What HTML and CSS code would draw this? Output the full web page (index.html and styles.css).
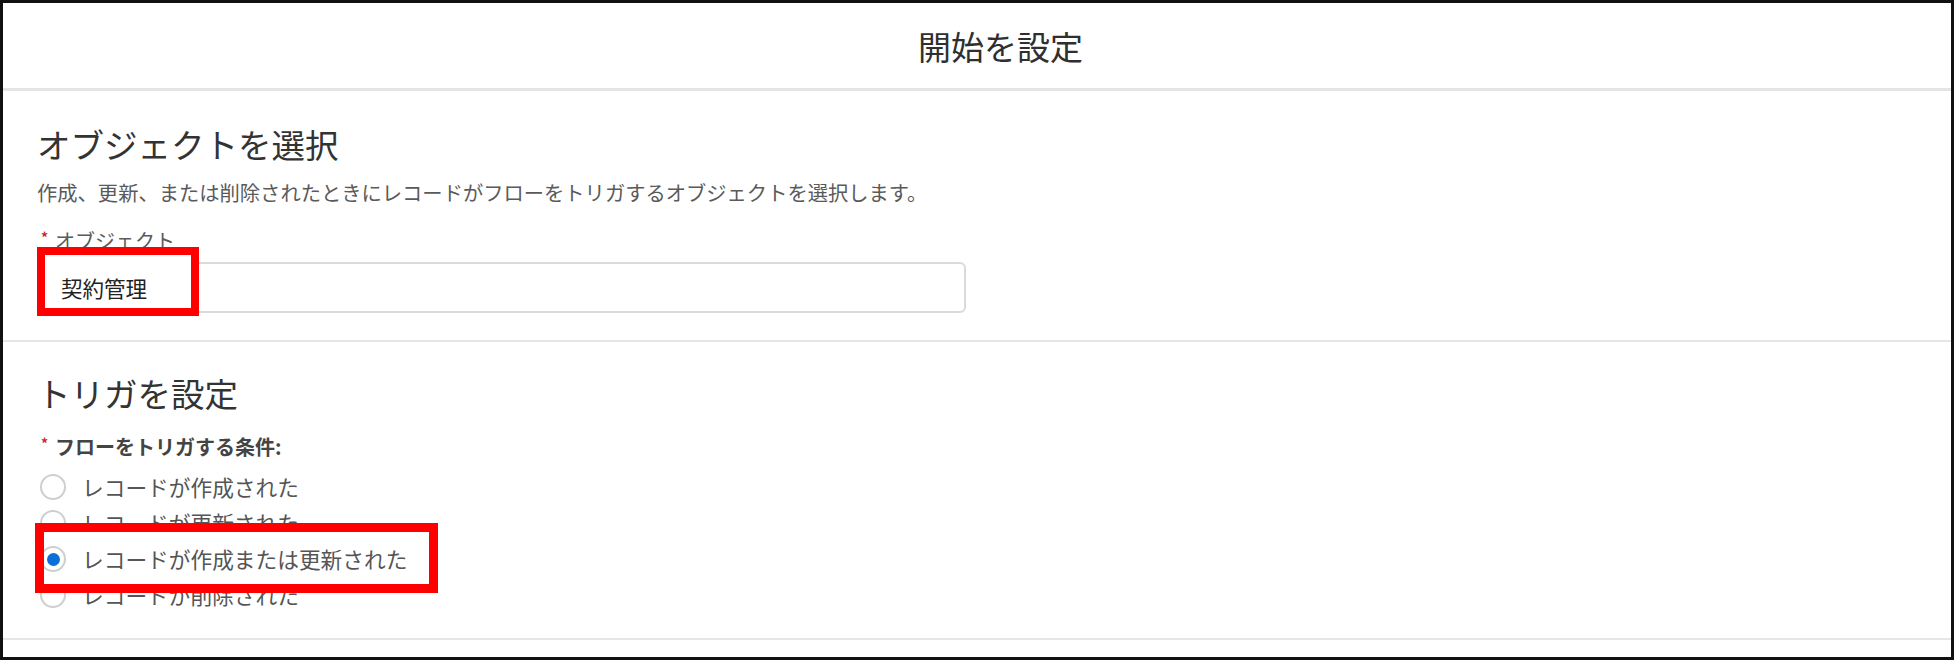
FILE: index.html
```html
<!DOCTYPE html>
<html lang="ja">
<head>
<meta charset="utf-8">
<title>開始を設定</title>
<link rel="stylesheet" href="styles.css">
</head>
<body>
<div class="frame">
  <header class="modal-header">
    <h1 class="modal-title">開始を設定</h1>
  </header>

  <section class="section section-object">
    <h2 class="section-title">オブジェクトを選択</h2>
    <p class="section-desc">作成、更新、または削除されたときにレコードがフローをトリガするオブジェクトを選択します。</p>
    <div class="field-label"><span class="req">*</span>オブジェクト</div>
    <div class="text-input">
      <span class="input-value highlight highlight-object">契約管理</span>
    </div>
  </section>

  <section class="section section-trigger">
    <h2 class="section-title">トリガを設定</h2>
    <div class="field-label field-label-bold"><span class="req">*</span>フローをトリガする条件:</div>
    <div class="radio-group">
      <label class="radio"><span class="radio-mark"></span><span class="radio-text">レコードが作成された</span></label>
      <label class="radio"><span class="radio-mark"></span><span class="radio-text">レコードが更新された</span></label>
      <label class="radio radio-checked highlight highlight-radio"><span class="radio-mark"></span><span class="radio-text">レコードが作成または更新された</span></label>
      <label class="radio"><span class="radio-mark"></span><span class="radio-text">レコードが削除された</span></label>
    </div>
  </section>
</div>
</body>
</html>
```

FILE: styles.css
```css
*,
*::before,
*::after {
  box-sizing: border-box;
}

html, body {
  margin: 0;
  padding: 0;
  background: #ffffff;
}

body {
  font-family: "Noto Sans CJK JP", "Noto Sans", sans-serif;
  color: #3e3e3c;
  width: 1956px;
  height: 660px;
  overflow: hidden;
}

.frame {
  width: 1954px;
  height: 660px;
  border: 3px solid #111111;
  background: #ffffff;
  display: flex;
  flex-direction: column;
}

.modal-header {
  height: 88px;
  flex: 0 0 auto;
  display: flex;
  align-items: center;
  justify-content: center;
  padding-left: 47px;
  border-bottom: 3px solid #e4e4e4;
}

.modal-title {
  margin: 0;
  font-size: 33px;
  line-height: 40px;
  font-weight: 400;
  color: #2f2f2f;
}

.section {
  flex: 0 0 auto;
  padding-left: 34px;
  border-bottom: 2px solid #e6e6e6;
}

.section-object {
  padding-top: 33px;
  padding-bottom: 27px;
}

.section-trigger {
  padding-top: 31px;
  padding-bottom: 25px;
}

.section-title {
  margin: 0;
  font-size: 33.5px;
  line-height: 40px;
  font-weight: 400;
  color: #333333;
}

.section-desc {
  margin: 14px 0 0;
  font-size: 20.3px;
  line-height: 28px;
  color: #5a5a5a;
}

.field-label {
  margin-top: 21px;
  font-size: 20px;
  line-height: 28px;
  color: #5a5a5a;
  display: flex;
  align-items: flex-start;
}

.field-label-bold {
  margin-top: 20px;
  font-weight: 700;
  color: #444444;
}

.req {
  color: #d0252a;
  font-size: 14px;
  line-height: 20px;
  width: 18px;
  padding-left: 4px;
  font-weight: 700;
}

.text-input {
  margin-top: 7px;
  width: 929px;
  height: 51px;
  border: 2px solid #dadada;
  border-radius: 6px;
  display: flex;
  align-items: center;
  padding-left: 22px;
}

.input-value {
  display: inline-block;
  font-size: 21.5px;
  line-height: 22px;
  color: #222222;
}

.radio-group {
  margin-top: 8px;
  display: flex;
  flex-direction: column;
}

.radio {
  height: 36px;
  display: flex;
  align-items: center;
  width: max-content;
}

.radio-mark {
  width: 26px;
  height: 26px;
  border: 2px solid #cfcfcf;
  border-radius: 50%;
  background: #ffffff;
  display: flex;
  align-items: center;
  justify-content: center;
  margin-left: 3px;
}

.radio-checked .radio-mark::before {
  content: "";
  width: 13px;
  height: 13px;
  border-radius: 50%;
  background: #0b6fd6;
}

.radio-text {
  margin-left: 16px;
  font-size: 21.7px;
  line-height: 30px;
  color: #555555;
}

/* red annotation boxes laid over the screenshot */
.highlight {
  position: relative;
  z-index: 1;
}

.highlight::before,
.highlight::after {
  content: "";
  position: absolute;
}

.highlight::before {
  background: #ffffff;
  z-index: -1;
}

.highlight::after {
  border: 8px solid #ff0000;
  pointer-events: none;
}

.highlight-object::before,
.highlight-object::after {
  left: -24px;
  top: -30px;
  width: 162px;
  height: 69px;
}

.highlight-radio::before,
.highlight-radio::after {
  left: -2px;
  top: -18px;
  width: 403px;
  height: 70px;
}

.highlight-radio::after {
  border-width: 9px;
}
```
